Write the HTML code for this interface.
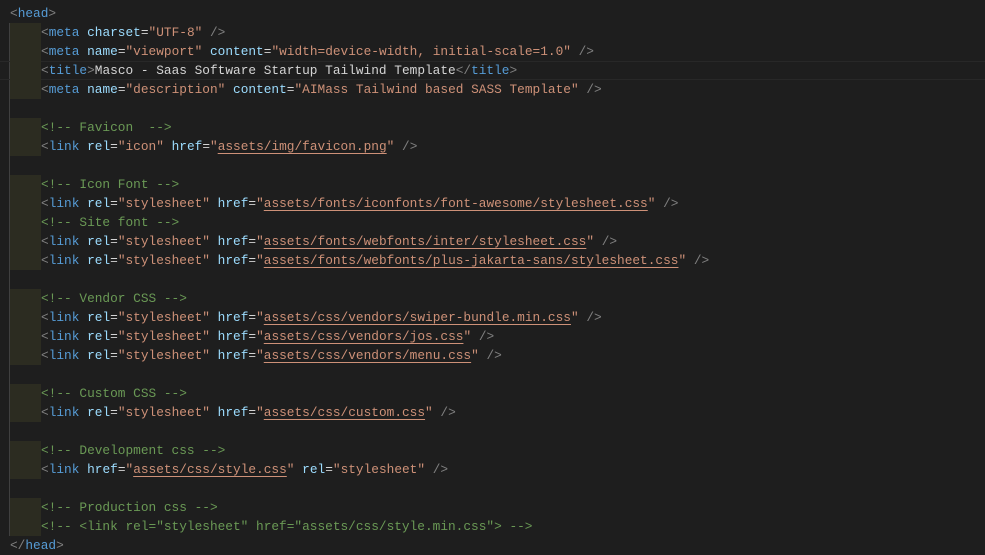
<!DOCTYPE html>
<html><head><meta charset="utf-8"><style>
body{margin:0;background:#1e1e1e;width:985px;height:555px;overflow:hidden;position:relative;font-family:"Liberation Mono",monospace;font-size:12.8px;}
.guide{position:absolute;left:9px;top:23px;width:1px;height:513px;background:#404040;}
.cur{position:absolute;left:0;top:61px;width:985px;height:17px;border-top:1px solid #282828;border-bottom:1px solid #282828;}
.l{position:absolute;left:0;height:19px;line-height:19px;white-space:pre;color:#d4d4d4;width:985px;}
.l .ind{display:inline-block;width:31px;height:19px;margin-left:10px;background:#2c2c21;vertical-align:top;}
.l .c{position:absolute;left:41px;top:0;}
.l .c0{position:absolute;left:10px;top:0;}
.p{color:#808080}.t{color:#569cd6}.a{color:#9cdcfe}.s{color:#ce9178}.m{color:#6a9955}
.u{text-decoration:underline;text-underline-offset:3px;text-decoration-color:#ce9178}
</style></head><body>
<div class="guide"></div>
<div class="cur"></div>
<div class="l" style="top:4px"><span class="c0"><span class="p">&lt;</span><span class="t">head</span><span class="p">&gt;</span></span></div>
<div class="l" style="top:23px"><span class="ind"></span><span class="c"><span class="p">&lt;</span><span class="t">meta</span> <span class="a">charset</span>=<span class="s">"UTF-8"</span> <span class="p">/&gt;</span></span></div>
<div class="l" style="top:42px"><span class="ind"></span><span class="c"><span class="p">&lt;</span><span class="t">meta</span> <span class="a">name</span>=<span class="s">"viewport"</span> <span class="a">content</span>=<span class="s">"width=device-width, initial-scale=1.0"</span> <span class="p">/&gt;</span></span></div>
<div class="l" style="top:61px"><span class="ind"></span><span class="c"><span class="p">&lt;</span><span class="t">title</span><span class="p">&gt;</span>Masco - Saas Software Startup Tailwind Template<span class="p">&lt;/</span><span class="t">title</span><span class="p">&gt;</span></span></div>
<div class="l" style="top:80px"><span class="ind"></span><span class="c"><span class="p">&lt;</span><span class="t">meta</span> <span class="a">name</span>=<span class="s">"description"</span> <span class="a">content</span>=<span class="s">"AIMass Tailwind based SASS Template"</span> <span class="p">/&gt;</span></span></div>
<div class="l" style="top:118px"><span class="ind"></span><span class="c m">&lt;!-- Favicon  --&gt;</span></div>
<div class="l" style="top:137px"><span class="ind"></span><span class="c"><span class="p">&lt;</span><span class="t">link</span> <span class="a">rel</span>=<span class="s">"icon"</span> <span class="a">href</span>=<span class="s">"<span class="u">assets/img/favicon.png</span>"</span> <span class="p">/&gt;</span></span></div>
<div class="l" style="top:175px"><span class="ind"></span><span class="c m">&lt;!-- Icon Font --&gt;</span></div>
<div class="l" style="top:194px"><span class="ind"></span><span class="c"><span class="p">&lt;</span><span class="t">link</span> <span class="a">rel</span>=<span class="s">"stylesheet"</span> <span class="a">href</span>=<span class="s">"<span class="u">assets/fonts/iconfonts/font-awesome/stylesheet.css</span>"</span> <span class="p">/&gt;</span></span></div>
<div class="l" style="top:213px"><span class="ind"></span><span class="c m">&lt;!-- Site font --&gt;</span></div>
<div class="l" style="top:232px"><span class="ind"></span><span class="c"><span class="p">&lt;</span><span class="t">link</span> <span class="a">rel</span>=<span class="s">"stylesheet"</span> <span class="a">href</span>=<span class="s">"<span class="u">assets/fonts/webfonts/inter/stylesheet.css</span>"</span> <span class="p">/&gt;</span></span></div>
<div class="l" style="top:251px"><span class="ind"></span><span class="c"><span class="p">&lt;</span><span class="t">link</span> <span class="a">rel</span>=<span class="s">"stylesheet"</span> <span class="a">href</span>=<span class="s">"<span class="u">assets/fonts/webfonts/plus-jakarta-sans/stylesheet.css</span>"</span> <span class="p">/&gt;</span></span></div>
<div class="l" style="top:289px"><span class="ind"></span><span class="c m">&lt;!-- Vendor CSS --&gt;</span></div>
<div class="l" style="top:308px"><span class="ind"></span><span class="c"><span class="p">&lt;</span><span class="t">link</span> <span class="a">rel</span>=<span class="s">"stylesheet"</span> <span class="a">href</span>=<span class="s">"<span class="u">assets/css/vendors/swiper-bundle.min.css</span>"</span> <span class="p">/&gt;</span></span></div>
<div class="l" style="top:327px"><span class="ind"></span><span class="c"><span class="p">&lt;</span><span class="t">link</span> <span class="a">rel</span>=<span class="s">"stylesheet"</span> <span class="a">href</span>=<span class="s">"<span class="u">assets/css/vendors/jos.css</span>"</span> <span class="p">/&gt;</span></span></div>
<div class="l" style="top:346px"><span class="ind"></span><span class="c"><span class="p">&lt;</span><span class="t">link</span> <span class="a">rel</span>=<span class="s">"stylesheet"</span> <span class="a">href</span>=<span class="s">"<span class="u">assets/css/vendors/menu.css</span>"</span> <span class="p">/&gt;</span></span></div>
<div class="l" style="top:384px"><span class="ind"></span><span class="c m">&lt;!-- Custom CSS --&gt;</span></div>
<div class="l" style="top:403px"><span class="ind"></span><span class="c"><span class="p">&lt;</span><span class="t">link</span> <span class="a">rel</span>=<span class="s">"stylesheet"</span> <span class="a">href</span>=<span class="s">"<span class="u">assets/css/custom.css</span>"</span> <span class="p">/&gt;</span></span></div>
<div class="l" style="top:441px"><span class="ind"></span><span class="c m">&lt;!-- Development css --&gt;</span></div>
<div class="l" style="top:460px"><span class="ind"></span><span class="c"><span class="p">&lt;</span><span class="t">link</span> <span class="a">href</span>=<span class="s">"<span class="u">assets/css/style.css</span>"</span> <span class="a">rel</span>=<span class="s">"stylesheet"</span> <span class="p">/&gt;</span></span></div>
<div class="l" style="top:498px"><span class="ind"></span><span class="c m">&lt;!-- Production css --&gt;</span></div>
<div class="l" style="top:517px"><span class="ind"></span><span class="c m">&lt;!-- &lt;link rel="stylesheet" href="assets/css/style.min.css"&gt; --&gt;</span></div>
<div class="l" style="top:536px"><span class="c0"><span class="p">&lt;/</span><span class="t">head</span><span class="p">&gt;</span></span></div>
</body></html>
